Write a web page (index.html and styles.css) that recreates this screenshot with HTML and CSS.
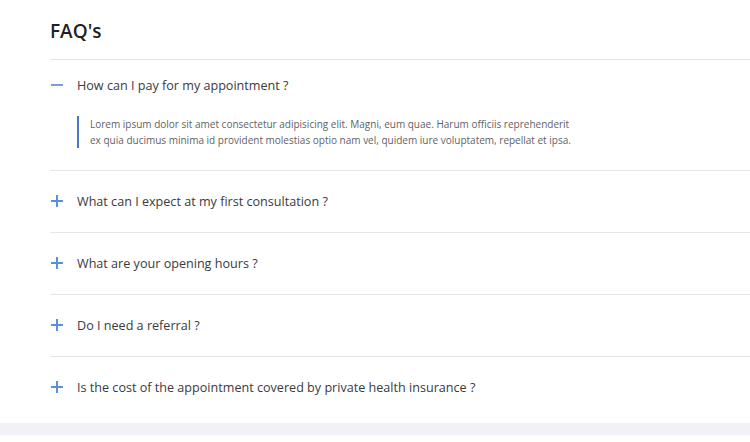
FILE: index.html
```html
<!DOCTYPE html>
<html>
<head>
<meta charset="utf-8">
<link rel="stylesheet" href="styles.css">
</head>
<body>
<section class="faq">
  <h1 class="faq-title">FAQ's</h1>
  <div class="faq-item open">
    <div class="faq-q"><span class="icon minus"></span><span class="q-text">How can I pay for my appointment ?</span></div>
    <div class="faq-a"><p>Lorem ipsum dolor sit amet consectetur adipisicing elit. Magni, eum quae. Harum officiis reprehenderit ex quia ducimus minima id provident molestias optio nam vel, quidem iure voluptatem, repellat et ipsa.</p></div>
  </div>
  <div class="faq-item">
    <div class="faq-q"><span class="icon plus"></span><span class="q-text">What can I expect at my first consultation ?</span></div>
  </div>
  <div class="faq-item">
    <div class="faq-q"><span class="icon plus"></span><span class="q-text">What are your opening hours ?</span></div>
  </div>
  <div class="faq-item">
    <div class="faq-q"><span class="icon plus"></span><span class="q-text">Do I need a referral ?</span></div>
  </div>
  <div class="faq-item last">
    <div class="faq-q"><span class="icon plus"></span><span class="q-text">Is the cost of the appointment covered by private health insurance ?</span></div>
  </div>
</section>
<div class="footer-band"></div>
</body>
</html>
```
FILE: styles.css
```css
html, body { margin: 0; padding: 0; background: #fff; }
body { font-family: "Open Sans", "Noto Sans", sans-serif; color: #333; }
.faq { padding: 18px 0 0 50px; }
.faq-title { margin: 0; font-size: 19px; font-weight: 600; color: #1f1f24; line-height: 27px; padding-bottom: 14px; border-bottom: 1px solid #e6e6e8; }
.faq-item { border-bottom: 1px solid #e6e6e8; }
.faq-item.last { border-bottom: none; }
.faq-q { display: flex; align-items: center; height: 51px; box-sizing: border-box; padding-bottom: 1px; }
.faq-item + .faq-item .faq-q { height: 61px; }
.icon { position: relative; width: 12px; height: 12px; margin: 0 14px 0 1px; flex: none; }
.icon::before, .icon::after { content: ""; position: absolute; background: #5a8fdb; }
.icon::before { left: 0; right: 0; top: 5px; height: 2px; }
.plus::after { top: 0; bottom: 0; left: 5px; width: 2px; }
.minus::before { background: #7c9dd9; }
.q-text { font-size: 12.6px; color: #3a3a40; }
.faq-a { padding: 5px 0 22px 27px; }
.faq-a p { margin: 0; border-left: 2px solid #4a78c2; padding-left: 11px; width: 490px; font-size: 10px; line-height: 16px; color: #5f5f66; }
.footer-band { margin-top: 5px; height: 12px; background: #f2f2f6; }
```
